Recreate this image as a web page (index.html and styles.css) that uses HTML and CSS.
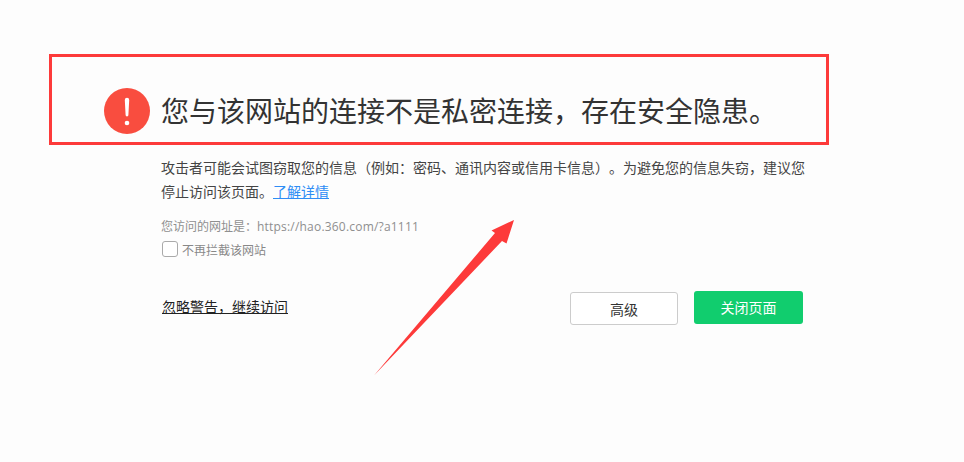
FILE: index.html
```html
<!DOCTYPE html>
<html lang="zh-CN">
<head>
  <meta charset="utf-8">
  <title>您与该网站的连接不是私密连接</title>
  <link rel="stylesheet" href="styles.css">
</head>
<body>
  <main class="warning">
    <header class="warning-head">
      <svg class="warning-icon" viewBox="0 0 46 46" aria-hidden="true">
        <circle cx="23" cy="23" r="23" fill="#f94d3f"/>
        <path d="M20.800 12a2.200 2.200 0 0 1 4.400 0L24.400 27a1.400 1.400 0 0 1-2.800 0z" fill="#fff"/>
        <circle cx="23" cy="35" r="2.300" fill="#fff"/>
      </svg>
      <h1>您与该网站的连接不是私密连接，存在安全隐患。</h1>
    </header>

    <div class="warning-body">
      <p class="desc">攻击者可能会试图窃取您的信息（例如：密码、通讯内容或信用卡信息）。为避免您的信息失窃，建议您停止访问该页面。<a href="#" class="more">了解详情</a></p>
      <p class="url">您访问的网址是：<span class="url-addr">https://hao.360.com/?a1111</span></p>
      <label class="no-block"><span class="check"></span>不再拦截该网站</label>

      <div class="actions">
        <a href="#" class="ignore">忽略警告，继续访问</a>
        <div class="buttons">
          <button class="btn btn-plain">高级</button>
          <button class="btn btn-close">关闭页面</button>
        </div>
      </div>
    </div>
  </main>

  <!-- annotation drawn over the page -->
  <div class="mark-box"></div>
  <svg class="mark-arrow" width="964" height="462" viewBox="0 0 964 462" aria-hidden="true">
    <path d="M374 375.500L495 233L491.500 230.500L514 220L506.500 243.500L502 241z" fill="#fd3a3a"/>
  </svg>
</body>
</html>
```

FILE: styles.css
```css
* {
  box-sizing: border-box;
}

html, body {
  height: 100%;
}

body {
  margin: 0;
  background: #fdfdfd;
  color: #333;
  font-family: "Noto Sans CJK SC", "Noto Sans", sans-serif;
  text-spacing-trim: space-all;
  overflow: hidden;
}

.warning {
  width: 710px;
  margin-left: 104px;
  padding-top: 88px;
}

.warning-head {
  display: flex;
  align-items: center;
  gap: 11px;
  height: 46px;
}

.warning-icon {
  width: 46px;
  height: 46px;
  flex: none;
}

h1 {
  margin: -2px 0 0;
  font-size: 28px;
  font-weight: 400;
  line-height: 46px;
  white-space: nowrap;
}

.warning-body {
  margin-left: 57px;
  width: 646px;
  padding-top: 21px;
}

.desc {
  margin: 0;
  font-size: 14px;
  line-height: 24px;
  color: #444;
}

.more {
  color: #2e8df5;
}

.url {
  margin: 14px 0 0;
  font-family: "Open Sans", "Noto Sans CJK SC", sans-serif;
  font-size: 12px;
  line-height: 20px;
  color: #8f8f8f;
}

.url-addr {
  letter-spacing: 0.2px;
}

.no-block {
  display: flex;
  align-items: center;
  gap: 4px;
  margin: 3px 0 0 1px;
  height: 18px;
  font-size: 12px;
  color: #888;
}

.check {
  width: 16px;
  height: 16px;
  border: 1px solid #aaa;
  border-radius: 3px;
  background: #fff;
}

.actions {
  display: flex;
  justify-content: space-between;
  align-items: flex-start;
  margin-top: 33px;
  padding-left: 1px;
}

.ignore {
  margin-top: 5px;
  font-size: 14px;
  line-height: 20px;
  color: #222;
}

.buttons {
  display: flex;
  align-items: flex-start;
  gap: 16px;
  margin-right: 4px;
}

.btn {
  height: 33px;
  font-family: inherit;
  font-size: 14px;
  border-radius: 3px;
}

.btn-plain {
  width: 108px;
  margin-top: 1px;
  background: #fff;
  border: 1px solid #ccc;
  color: #333;
}

.btn-close {
  width: 109px;
  padding: 0 0 2px;
  background: #11cd6e;
  border: 0;
  color: #fff;
}

.mark-box {
  position: absolute;
  left: 49px;
  top: 54px;
  width: 780px;
  height: 91px;
  border: 3px solid #fd3a3a;
}

.mark-arrow {
  position: absolute;
  left: 0;
  top: 0;
  pointer-events: none;
}
```
